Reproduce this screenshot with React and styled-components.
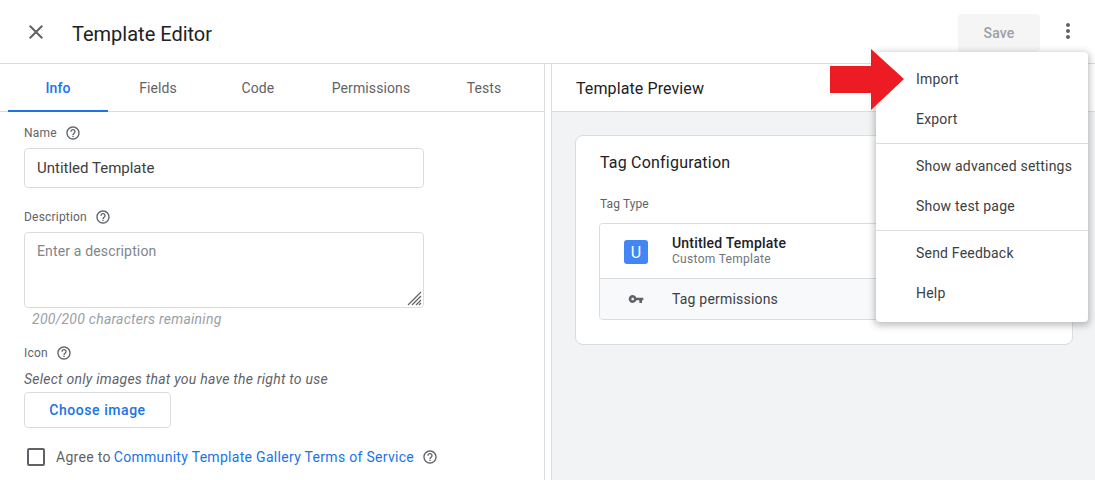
import styled, { createGlobalStyle } from "styled-components";
import { MdClose, MdMoreVert, MdOutlineHelpOutline, MdVpnKey } from "react-icons/md";

const GlobalStyle = createGlobalStyle`
  html, body {
    margin: 0;
    padding: 0;
    height: 100%;
    overflow: hidden;
    background: #fff;
    font-family: Roboto, "Liberation Sans", sans-serif;
    color: #202124;
  }
  * {
    box-sizing: border-box;
  }
`;

const Page = styled.div`
  position: relative;
  width: 1095px;
  height: 480px;
  overflow: hidden;
  display: flex;
  flex-direction: column;
`;

const Header = styled.header`
  height: 64px;
  flex: none;
  display: flex;
  align-items: center;
  padding: 0 15px 0 24px;
  border-bottom: 1px solid #dadce0;
`;

const CloseIcon = styled(MdClose)`
  font-size: 24px;
  color: #5f6368;
  margin-right: 24px;
`;

const Title = styled.h1`
  flex: 1;
  margin: 0;
  padding-top: 4px;
  font-size: 20px;
  font-weight: 400;
  color: #202124;
`;

const SaveButton = styled.button`
  width: 82px;
  height: 38px;
  margin: 2px 16px 0 0;
  border: none;
  border-radius: 4px;
  background: #f5f5f5;
  color: #9aa0a6;
  font: 500 14px Roboto, sans-serif;
  letter-spacing: 0.2px;
`;

const MoreIcon = styled(MdMoreVert)`
  font-size: 24px;
  color: #5f6368;
  margin-top: -2px;
`;

const Body = styled.div`
  flex: 1;
  display: flex;
  min-height: 0;
`;

const LeftPane = styled.section`
  width: 545px;
  flex: none;
  border-right: 1px solid #dadce0;
`;

const Tabs = styled.nav`
  display: flex;
  height: 48px;
  padding: 0 8px;
  border-bottom: 1px solid #dadce0;
`;

const Tab = styled.div`
  width: ${(p) => (p.$wide ? 126 : 100)}px;
  display: flex;
  align-items: center;
  justify-content: center;
  padding-top: 2px;
  font-size: 14px;
  font-weight: ${(p) => (p.$active ? 500 : 400)};
  letter-spacing: 0.1px;
  color: ${(p) => (p.$active ? "#1a73e8" : "#5f6368")};
  border-bottom: 2px solid ${(p) => (p.$active ? "#1a73e8" : "transparent")};
  margin-bottom: -1px;
`;

const Form = styled.div`
  padding: 13px 24px 0;
`;

const Label = styled.div`
  display: flex;
  align-items: center;
  gap: 8px;
  height: 16px;
  margin-top: ${(p) => p.$top || 0}px;
  font-size: 12px;
  color: #5f6368;
  letter-spacing: 0.2px;
`;

const HelpIcon = styled(MdOutlineHelpOutline)`
  font-size: 16px;
  color: #5f6368;
`;

const TextBox = styled.div`
  position: relative;
  width: 400px;
  height: ${(p) => p.$height}px;
  margin-top: 7px;
  padding: ${(p) => (p.$muted ? 10 : 11)}px 12px;
  border: 1px solid #dadce0;
  border-radius: 4px;
  font-size: ${(p) => (p.$muted ? 14 : 15)}px;
  letter-spacing: ${(p) => (p.$muted ? 0.15 : 0)}px;
  line-height: 16px;
  color: ${(p) => (p.$muted ? "#80868b" : "#3c4043")};
`;

const ResizeGrip = styled.svg`
  position: absolute;
  right: 1px;
  bottom: 1px;
`;

const Hint = styled.div`
  margin: 3px 0 0 8px;
  font-size: 14px;
  font-style: italic;
  line-height: 16px;
  letter-spacing: 0.25px;
  color: #9aa0a6;
`;

const Note = styled.div`
  margin-top: 10px;
  font-size: 14px;
  font-style: italic;
  line-height: 16px;
  letter-spacing: 0.25px;
  color: #5f6368;
`;

const ChooseButton = styled.button`
  display: block;
  width: 147px;
  height: 36px;
  margin-top: 5px;
  border: 1px solid #dadce0;
  border-radius: 4px;
  background: #fff;
  color: #1a73e8;
  font: 500 14px Roboto, sans-serif;
  letter-spacing: 0.55px;
`;

const AgreeRow = styled.div`
  display: flex;
  align-items: center;
  margin: 20px 0 0 3px;
  font-size: 14px;
  letter-spacing: 0.3px;
  color: #5f6368;
`;

const CheckBox = styled.span`
  width: 18px;
  height: 18px;
  margin-right: 11px;
  border: 2px solid #5f6368;
  border-radius: 2px;
`;

const Link = styled.a`
  margin: 0 8px 0 3px;
  color: #1a73e8;
`;

const RightPane = styled.section`
  flex: 1;
  padding-left: 6px;
  display: flex;
  flex-direction: column;
`;

const PreviewHeader = styled.div`
  height: 48px;
  flex: none;
  display: flex;
  align-items: center;
  padding: 2px 0 0 24px;
  border-left: 1px solid #dadce0;
  border-bottom: 1px solid #dadce0;
  font-size: 16px;
  letter-spacing: 0.1px;
  color: #202124;
`;

const PreviewBody = styled.div`
  flex: 1;
  padding: 23px 22px 0 23px;
  border-left: 1px solid #dadce0;
  background: #f1f3f4;
`;

const Card = styled.div`
  height: 210px;
  padding: 17px 23px 0;
  background: #fff;
  border: 1px solid #dadce0;
  border-radius: 8px;
`;

const CardTitle = styled.div`
  margin-left: 1px;
  font-size: 16px;
  line-height: 19px;
  letter-spacing: 0.2px;
  color: #202124;
`;

const FieldLabel = styled.div`
  margin: 25px 0 0 1px;
  font-size: 12px;
  line-height: 14px;
  letter-spacing: 0.1px;
  color: #5f6368;
`;

const TagBox = styled.div`
  margin-top: 12px;
  border: 1px solid #dadce0;
  border-radius: 4px;
  overflow: hidden;
`;

const TagRow = styled.div`
  display: flex;
  align-items: center;
  height: ${(p) => p.$height}px;
  background: ${(p) => (p.$shaded ? "#f8f9fa" : "#fff")};
  border-top: ${(p) => (p.$shaded ? "1px solid #dadce0" : "none")};
`;

const IconCell = styled.div`
  width: 72px;
  flex: none;
  display: flex;
  justify-content: center;
`;

const TagAvatar = styled.div`
  width: 24px;
  height: 24px;
  margin-top: 2px;
  display: flex;
  align-items: center;
  justify-content: center;
  border-radius: 3px;
  background: #4285f4;
  color: #fff;
  font-size: 16px;
`;

const KeyIcon = styled(MdVpnKey)`
  font-size: 16px;
  color: #5f6368;
`;

const TagText = styled.div`
  margin-top: -1px;
`;

const TagName = styled.div`
  font-size: 14px;
  font-weight: 500;
  line-height: 16px;
  letter-spacing: 0.2px;
  color: #202124;
`;

const TagKind = styled.div`
  margin-top: 1px;
  font-size: 12px;
  line-height: 14px;
  letter-spacing: 0.3px;
  color: #70757a;
`;

const TagPermission = styled.div`
  font-size: 14px;
  letter-spacing: 0.2px;
  color: #3c4043;
`;

const Menu = styled.div`
  position: absolute;
  left: 876px;
  top: 52px;
  width: 212px;
  height: 270px;
  padding-top: 7px;
  background: #fff;
  border-radius: 4px;
  box-shadow: 0 2px 6px 2px rgba(60, 64, 67, 0.3);
`;

const MenuItem = styled.div`
  height: 40px;
  display: flex;
  align-items: center;
  padding-left: 40px;
  font-size: 14px;
  letter-spacing: 0.2px;
  white-space: nowrap;
  color: #3c4043;
`;

const MenuDivider = styled.div`
  height: 1px;
  margin: 4px 0 2px;
  background: #dadce0;
`;

const Arrow = styled.svg`
  position: absolute;
  left: 830px;
  top: 49px;
`;

const tabs = ["Info", "Fields", "Code", "Permissions", "Tests"];

const App = () => {
  return (
    <Page>
      <GlobalStyle />
      <Header>
        <CloseIcon />
        <Title>Template Editor</Title>
        <SaveButton disabled>Save</SaveButton>
        <MoreIcon />
      </Header>
      <Body>
        <LeftPane>
          <Tabs>
            {tabs.map((tab) => (
              <Tab key={tab} $active={tab === "Info"} $wide={tab === "Permissions"}>
                {tab}
              </Tab>
            ))}
          </Tabs>
          <Form>
            <Label>
              Name <HelpIcon />
            </Label>
            <TextBox $height={40}>Untitled Template</TextBox>
            <Label $top={21}>
              Description <HelpIcon />
            </Label>
            <TextBox $height={76} $muted>
              Enter a description
              <ResizeGrip width="15" height="15" viewBox="0 0 15 15">
                <path d="M1 14 14 1M5 14 14 5M9 14 14 9M12 14 14 12" stroke="#5f6368" strokeWidth="1.2" fill="none" />
              </ResizeGrip>
            </TextBox>
            <Hint>200/200 characters remaining</Hint>
            <Label $top={18}>
              Icon <HelpIcon />
            </Label>
            <Note>Select only images that you have the right to use</Note>
            <ChooseButton>Choose image</ChooseButton>
            <AgreeRow>
              <CheckBox />
              Agree to <Link>Community Template Gallery Terms of Service</Link>
              <HelpIcon />
            </AgreeRow>
          </Form>
        </LeftPane>
        <RightPane>
          <PreviewHeader>Template Preview</PreviewHeader>
          <PreviewBody>
            <Card>
              <CardTitle>Tag Configuration</CardTitle>
              <FieldLabel>Tag Type</FieldLabel>
              <TagBox>
                <TagRow $height={54}>
                  <IconCell>
                    <TagAvatar>U</TagAvatar>
                  </IconCell>
                  <TagText>
                    <TagName>Untitled Template</TagName>
                    <TagKind>Custom Template</TagKind>
                  </TagText>
                </TagRow>
                <TagRow $height={41} $shaded>
                  <IconCell>
                    <KeyIcon />
                  </IconCell>
                  <TagPermission>Tag permissions</TagPermission>
                </TagRow>
              </TagBox>
            </Card>
          </PreviewBody>
        </RightPane>
      </Body>
      <Menu>
        <MenuItem>Import</MenuItem>
        <MenuItem>Export</MenuItem>
        <MenuDivider />
        <MenuItem>Show advanced settings</MenuItem>
        <MenuItem>Show test page</MenuItem>
        <MenuDivider />
        <MenuItem>Send Feedback</MenuItem>
        <MenuItem>Help</MenuItem>
      </Menu>
      <Arrow width="76" height="62" viewBox="0 0 76 62">
        <path d="M0 17H41V0L74 30 41 61V44H0Z" fill="#ed1c24" />
      </Arrow>
    </Page>
  );
};

export default App;
